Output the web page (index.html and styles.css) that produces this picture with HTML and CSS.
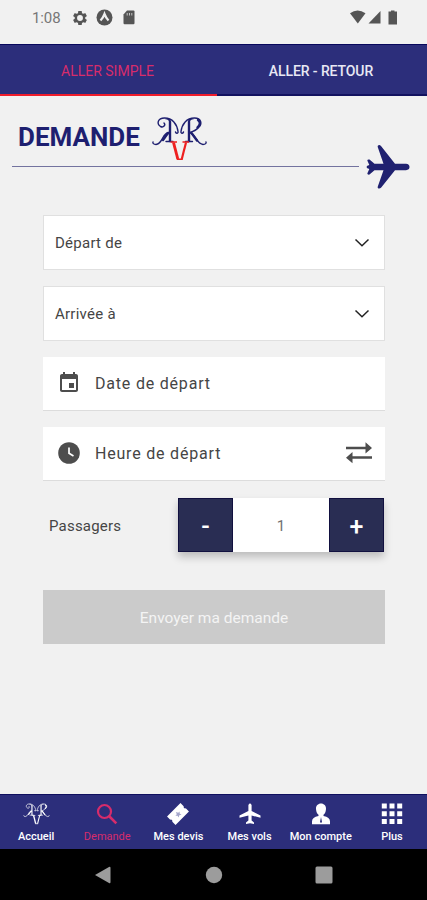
FILE: index.html
```
<!DOCTYPE html>
<html lang="fr">
<head>
<meta charset="utf-8">
<title>Demande</title>
<link rel="stylesheet" href="styles.css">
</head>
<body>
<svg class="defs" aria-hidden="true">
  <symbol id="monogram" viewBox="0 0 56 46">
    <g fill="none" stroke="currentColor" stroke-linecap="round">
      <path stroke-width="1.400" d="M26.500 15.500C25.500 8 21 2 13 2C6 2 5 8 9 10.500C12 12 14.500 9 12.500 7M14 2.500C17 2.500 18 4 18.500 6M17 16.500C11 17 11 28 4.500 28.500C2 28.500 1 27 1.500 26M26.500 15.500C27 17.500 24.500 18 24 16M14.500 25.500H21.500"/>
      <path stroke-width="2.400" d="M18.500 5.500V25M16.500 17L11.500 24"/>
      <path stroke-width="1.400" d="M29.500 15.500C30.500 8 35 2 43 2C50 2 51 8 47 11.500C44 15 40 16 38 16.500C44 18 45 28 51.500 28.500C54 28.500 55 27 54.500 26M42 2.500C39 2.500 38 4 37.500 6M29.500 15.500C29 17.500 31.500 18 32 16M34 25.500H41"/>
      <path stroke-width="2.400" d="M37.500 5.500V25M40 17L45.500 24.500M46.500 4C49.500 6 48.500 9.500 46 11.500"/>
    </g>
    <g class="monogram-v" fill="none">
      <path stroke-width="2.900" d="M22 26.500L26.300 43"/>
      <path stroke-width="2.200" d="M34.500 26.500L30.300 43"/>
      <path stroke-width="1.600" d="M19 26H25.500M31 26H37.500M25.300 43.300H31.300"/>
    </g>
  </symbol>
  <symbol id="chevron" viewBox="0 0 16 10"><path d="M1.500 1.500L8 7.800L14.500 1.500" fill="none" stroke="currentColor" stroke-width="1.500"/></symbol>
</svg>

<header class="status">
  <span class="clock">1:08</span>
  <svg class="gear" viewBox="2 2 20 20"><path fill="currentColor" fill-rule="evenodd" d="M19.430 12.980c.04-.32.07-.64.07-.98s-.03-.66-.07-.98l2.110-1.650c.19-.15.24-.42.12-.64l-2-3.460c-.12-.22-.39-.3-.61-.22l-2.490 1c-.52-.4-1.080-.73-1.690-.98l-.38-2.650C14.460 2.180 14.250 2 14 2h-4c-.25 0-.46.18-.49.42l-.38 2.650c-.61.25-1.170.59-1.690.98l-2.490-1c-.23-.09-.49 0-.61.22l-2 3.460c-.13.22-.07.49.12.64l2.110 1.650c-.04.32-.07.65-.07.98s.03.66.07.98l-2.110 1.650c-.19.15-.24.42-.12.64l2 3.460c.12.22.39.3.61.22l2.490-1c.52.4 1.080.73 1.690.98l.38 2.650c.03.24.24.42.49.42h4c.25 0 .46-.18.49-.42l.38-2.650c.61-.25 1.170-.59 1.690-.98l2.490 1c.23.09.49 0 .61-.22l2-3.460c.12-.22.07-.49-.12-.64zM12 16.200a4.200 4.200 0 1 1 0-8.400a4.200 4.200 0 0 1 0 8.400z"/></svg>
  <svg class="compass" viewBox="0 0 17 17"><circle cx="8.500" cy="8.500" r="8" fill="currentColor"/><path d="M4.500 11.500Q7 9 8.500 5Q10 9 12.500 11.500" fill="none" stroke="#f0f0f0" stroke-width="2.200"/></svg>
  <svg class="card" viewBox="0 0 12 15"><path fill="currentColor" d="M4 .5H10.500Q11.500 .5 11.500 1.500V13Q11.500 14.200 10.500 14.200H1.500Q.5 14.200 .5 13V4.500Z"/><path d="M4.200 3V5.500M6.500 3V5.500M8.800 3V5.500" stroke="#c4c4c4" stroke-width="1"/></svg>
  <svg class="signals" viewBox="0 0 48 15"><g fill="currentColor"><path d="M0 3.200Q7.500-2 15.500 3.200L7.800 13.500Z"/><path d="M30.500 1V13.500H18.500Z"/><path d="M38.500 1.500H41V.5H44.500V1.500H47V14.500H38.500Z"/></g></svg>
</header>

<nav class="tabs">
  <a class="tab tab-active">ALLER SIMPLE</a>
  <a class="tab">ALLER - RETOUR</a>
</nav>

<main class="content">
  <div class="heading">
    <div class="title">
      <h1>DEMANDE</h1>
      <svg class="logo"><use href="#monogram"/></svg>
    </div>
    <svg class="plane" viewBox="0 0 44 46"><path fill="currentColor" d="M12 1.500Q13.500 .5 15 2L29 19.800H40Q43.500 20.200 43.500 23Q43.500 25.800 40 26.200H29L15 43.800Q13.500 45.200 12 44.200Q11.400 43.700 11.800 42.500L17.500 26.200H8.500L3.500 30.500Q1.500 31 1.300 29.500L3.300 25L.8 24V22L3.300 21L1.300 16.500Q1.500 15 3.500 15.500L8.500 19.800H17.500L11.800 3.200Q11.400 2 12 1.500Z"/></svg>
  </div>

  <form class="form">
    <div class="field select"><span>Départ de</span><svg class="chevron"><use href="#chevron"/></svg></div>
    <div class="field select"><span>Arrivée à</span><svg class="chevron"><use href="#chevron"/></svg></div>
    <div class="field picker">
      <svg class="picker-icon" viewBox="0 0 24 24"><path fill="currentColor" d="M17 12h-5v5h5v-5zM16 1v2H8V1H6v2H5c-1.110 0-1.990.9-1.990 2L3 19c0 1.100.89 2 2 2h14c1.100 0 2-.9 2-2V5c0-1.100-.9-2-2-2h-1V1h-2zm3 18H5V8h14v11z"/></svg>
      <span class="picker-text">Date de départ</span>
    </div>
    <div class="field picker">
      <svg class="picker-icon" viewBox="0 0 24 24"><circle cx="12" cy="12" r="10.800" fill="currentColor"/><path d="M12 6.500V12.200L16.500 15" fill="none" stroke="#fff" stroke-width="1.700"/></svg>
      <span class="picker-text">Heure de départ</span>
      <svg class="swap" viewBox="0 0 28 22"><g fill="currentColor"><path d="M1 4.800H20.500V.3L27 6L20.500 11.500V7.200H1Z"/><path d="M27 14.300H7.500V10L1 15.700L7.500 21.300V16.800H27Z"/></g></svg>
    </div>
    <div class="passengers">
      <span class="passengers-label">Passagers</span>
      <div class="stepper"><span class="step">-</span><span class="count">1</span><span class="step">+</span></div>
    </div>
    <div class="submit">Envoyer ma demande</div>
  </form>
</main>

<nav class="bottom">
  <a class="item"><svg class="mini-logo"><use href="#monogram"/></svg><span>Accueil</span></a>
  <a class="item item-active"><svg viewBox="0 0 22 22"><circle cx="8.500" cy="8.500" r="6.500" fill="none" stroke="currentColor" stroke-width="2.200"/><path d="M13 13L20.300 20.300" stroke="currentColor" stroke-width="2.600"/></svg><span>Demande</span></a>
  <a class="item"><svg viewBox="0 0 22 22"><g transform="rotate(-45 11 11)"><path fill="currentColor" d="M1.500 5H20.500V9.500Q18.500 11 20.500 12.500V17H1.500V12.500Q3.500 11 1.500 9.500Z"/><path d="M11 8L12 10.300H14L12.500 11.800L13 14L11 12.800L9 14L9.500 11.800L8 10.300H10Z" fill="#a4a6cb"/></g></svg><span>Mes devis</span></a>
  <a class="item"><svg viewBox="0 0 22 22"><path fill="currentColor" d="M9.400 2Q11-.8 12.600 2V8L21.500 12.500V14.800L12.600 12.500V17.500L15 19.500V21L11 20.300L7 21V19.500L9.400 17.500V12.500L.5 14.800V12.500L9.400 8Z"/></svg><span>Mes vols</span></a>
  <a class="item"><svg viewBox="0 0 22 22"><path fill="currentColor" d="M11 .5C14 .5 16.200 2.800 16 6C15.800 9.500 14.500 11 13.500 11.800V13Q20 14 20 18.500V21.300H2V18.500Q2 14 8.500 13V11.800C7.500 11 6.200 9.500 6 6C5.800 2.800 8 .5 11 .5Z"/><path d="M11 14L10 19L11 20L12 19Z" fill="#2c2e7b"/></svg><span>Mon compte</span></a>
  <a class="item"><svg viewBox="0 0 22 22"><path fill="currentColor" d="M.8.500h5v5h-5zM8.500.500h5v5h-5zM16.200.500h5v5h-5zM.8 8.300h5v5h-5zM8.500 8.300h5v5h-5zM16.200 8.300h5v5h-5zM.8 16h5v5h-5zM8.500 16h5v5h-5zM16.200 16h5v5h-5z"/></svg><span>Plus</span></a>
</nav>

<footer class="system">
  <svg viewBox="0 0 18 18"><path fill="currentColor" d="M1 9L15 1Q16.500 .3 16.500 2V16Q16.500 17.700 15 17Z"/></svg>
  <svg viewBox="0 0 18 18"><circle cx="9" cy="9" r="8.200" fill="currentColor"/></svg>
  <svg viewBox="0 0 18 18"><rect x=".5" y=".5" width="17" height="17" rx="1.500" fill="currentColor"/></svg>
</footer>
</body>
</html>
```
FILE: styles.css
```
* { box-sizing: border-box; }
body {
  margin: 0;
  height: 900px;
  display: flex;
  flex-direction: column;
  overflow: hidden;
  background: #f1f1f1;
  color: #454545;
  font-family: Roboto, "Liberation Sans", sans-serif;
}
svg { display: block; flex: none; }
.defs { width: 0; height: 0; position: absolute; }

.status {
  height: 44px;
  flex: none;
  display: flex;
  align-items: center;
  padding: 0 29px 9px 32px;
  color: #555;
}
.clock { width: 41px; font-size: 15px; letter-spacing: -.1px; color: #777; }
.gear { width: 14px; height: 14px; }
.compass { width: 17px; height: 17px; margin-left: 9px; }
.card { width: 12px; height: 15px; margin-left: 10px; }
.signals { width: 48px; height: 15px; margin-left: auto; }

.tabs {
  height: 52px;
  flex: none;
  display: flex;
  background: #2c2e7b;
  border-top: 1px solid #08085c;
}
.tab {
  flex: 1;
  display: flex;
  align-items: center;
  justify-content: center;
  padding: 3px 2px 0 0;
  border-bottom: 2px solid #12125f;
  color: #e8e8f4;
  font-size: 14px;
  font-weight: 500;
  letter-spacing: -.1px;
}
.tab-active { flex: 0 0 217px; border-color: #f01d2b; color: #d72c6b; font-weight: 400; letter-spacing: 0; }

.content { flex: 1; min-height: 0; }
.heading { height: 119px; display: flex; padding: 20px 16px 0 12px; }
.title {
  width: 347px;
  height: 51px;
  display: flex;
  padding-left: 6px;
  border-bottom: 1px solid #73739f;
}
h1 { margin: 5px 0 0; width: 133px; font-size: 26px; line-height: 32px; font-weight: 700; color: #1e1f70; }
.logo { width: 57px; height: 46px; color: #1e1f70; --v: #ee2020; }
.monogram-v { stroke: var(--v, currentColor); }
.plane { width: 44px; height: 46px; margin: 28px 0 0 7px; color: #202170; }

.form { width: 342px; margin: 0 0 0 43px; display: flex; flex-direction: column; }
.field { display: flex; align-items: center; height: 55px; background: #fff; }
.select {
  justify-content: space-between;
  margin-bottom: 16px;
  padding: 1px 14px 0 11px;
  border: 1px solid #e0e0e0;
  font-size: 15px;
  letter-spacing: .25px;
}
.chevron { width: 16px; height: 10px; color: #222; }
.picker { height: 54px; margin-bottom: 16px; padding: 0 12px 2px 14px; border-bottom: 1px solid #dcdcdc; font-size: 16px; }
.picker-icon { width: 24px; height: 24px; margin-right: 14px; color: #4d4d4d; }
.picker-text { letter-spacing: .8px; padding-top: 1px; }
.swap { width: 28px; height: 22px; margin-left: auto; color: #4d4d4d; }
.passengers { height: 54px; margin-top: 1px; display: flex; align-items: center; justify-content: space-between; padding: 0 1px 0 6px; font-size: 15px; }
.passengers-label { letter-spacing: .2px; padding-top: 1px; }
.stepper { display: flex; width: 206px; height: 54px; background: #fff; box-shadow: 0 5px 8px rgba(0, 0, 0, .22); }
.step, .count { display: flex; align-items: center; justify-content: center; }
.step { width: 55px; padding-top: 2px; background: #292d53; border: 1px solid #11103f; color: #fff; font-size: 25px; font-weight: 500; }
.count { flex: 1; padding-top: 1px; color: #707070; }
.submit {
  height: 54px;
  margin-top: 38px;
  display: flex;
  align-items: center;
  justify-content: center;
  padding-top: 2px;
  background: #cbcbcb;
  color: #f4f4f4;
  font-size: 15.5px;
}

.bottom { height: 55px; flex: none; display: flex; background: #2c2e7b; border-top: 1px solid #10105f; }
.item {
  flex: 1;
  display: flex;
  flex-direction: column;
  align-items: center;
  padding: 8px 0 0 1px;
  color: #fff;
  font-size: 11px;
  line-height: 14px;
  font-weight: 500;
  white-space: nowrap;
}
.item svg { width: 22px; height: 22px; margin-bottom: 5px; }
.item .mini-logo { width: 27px; }
.item-active { color: #d72c6b; font-weight: 400; }

.system {
  height: 51px;
  flex: none;
  display: flex;
  justify-content: space-between;
  align-items: center;
  padding: 0 94px;
  background: #000;
  color: #9c9c9c;
}
.system svg { width: 18px; height: 18px; }
```
